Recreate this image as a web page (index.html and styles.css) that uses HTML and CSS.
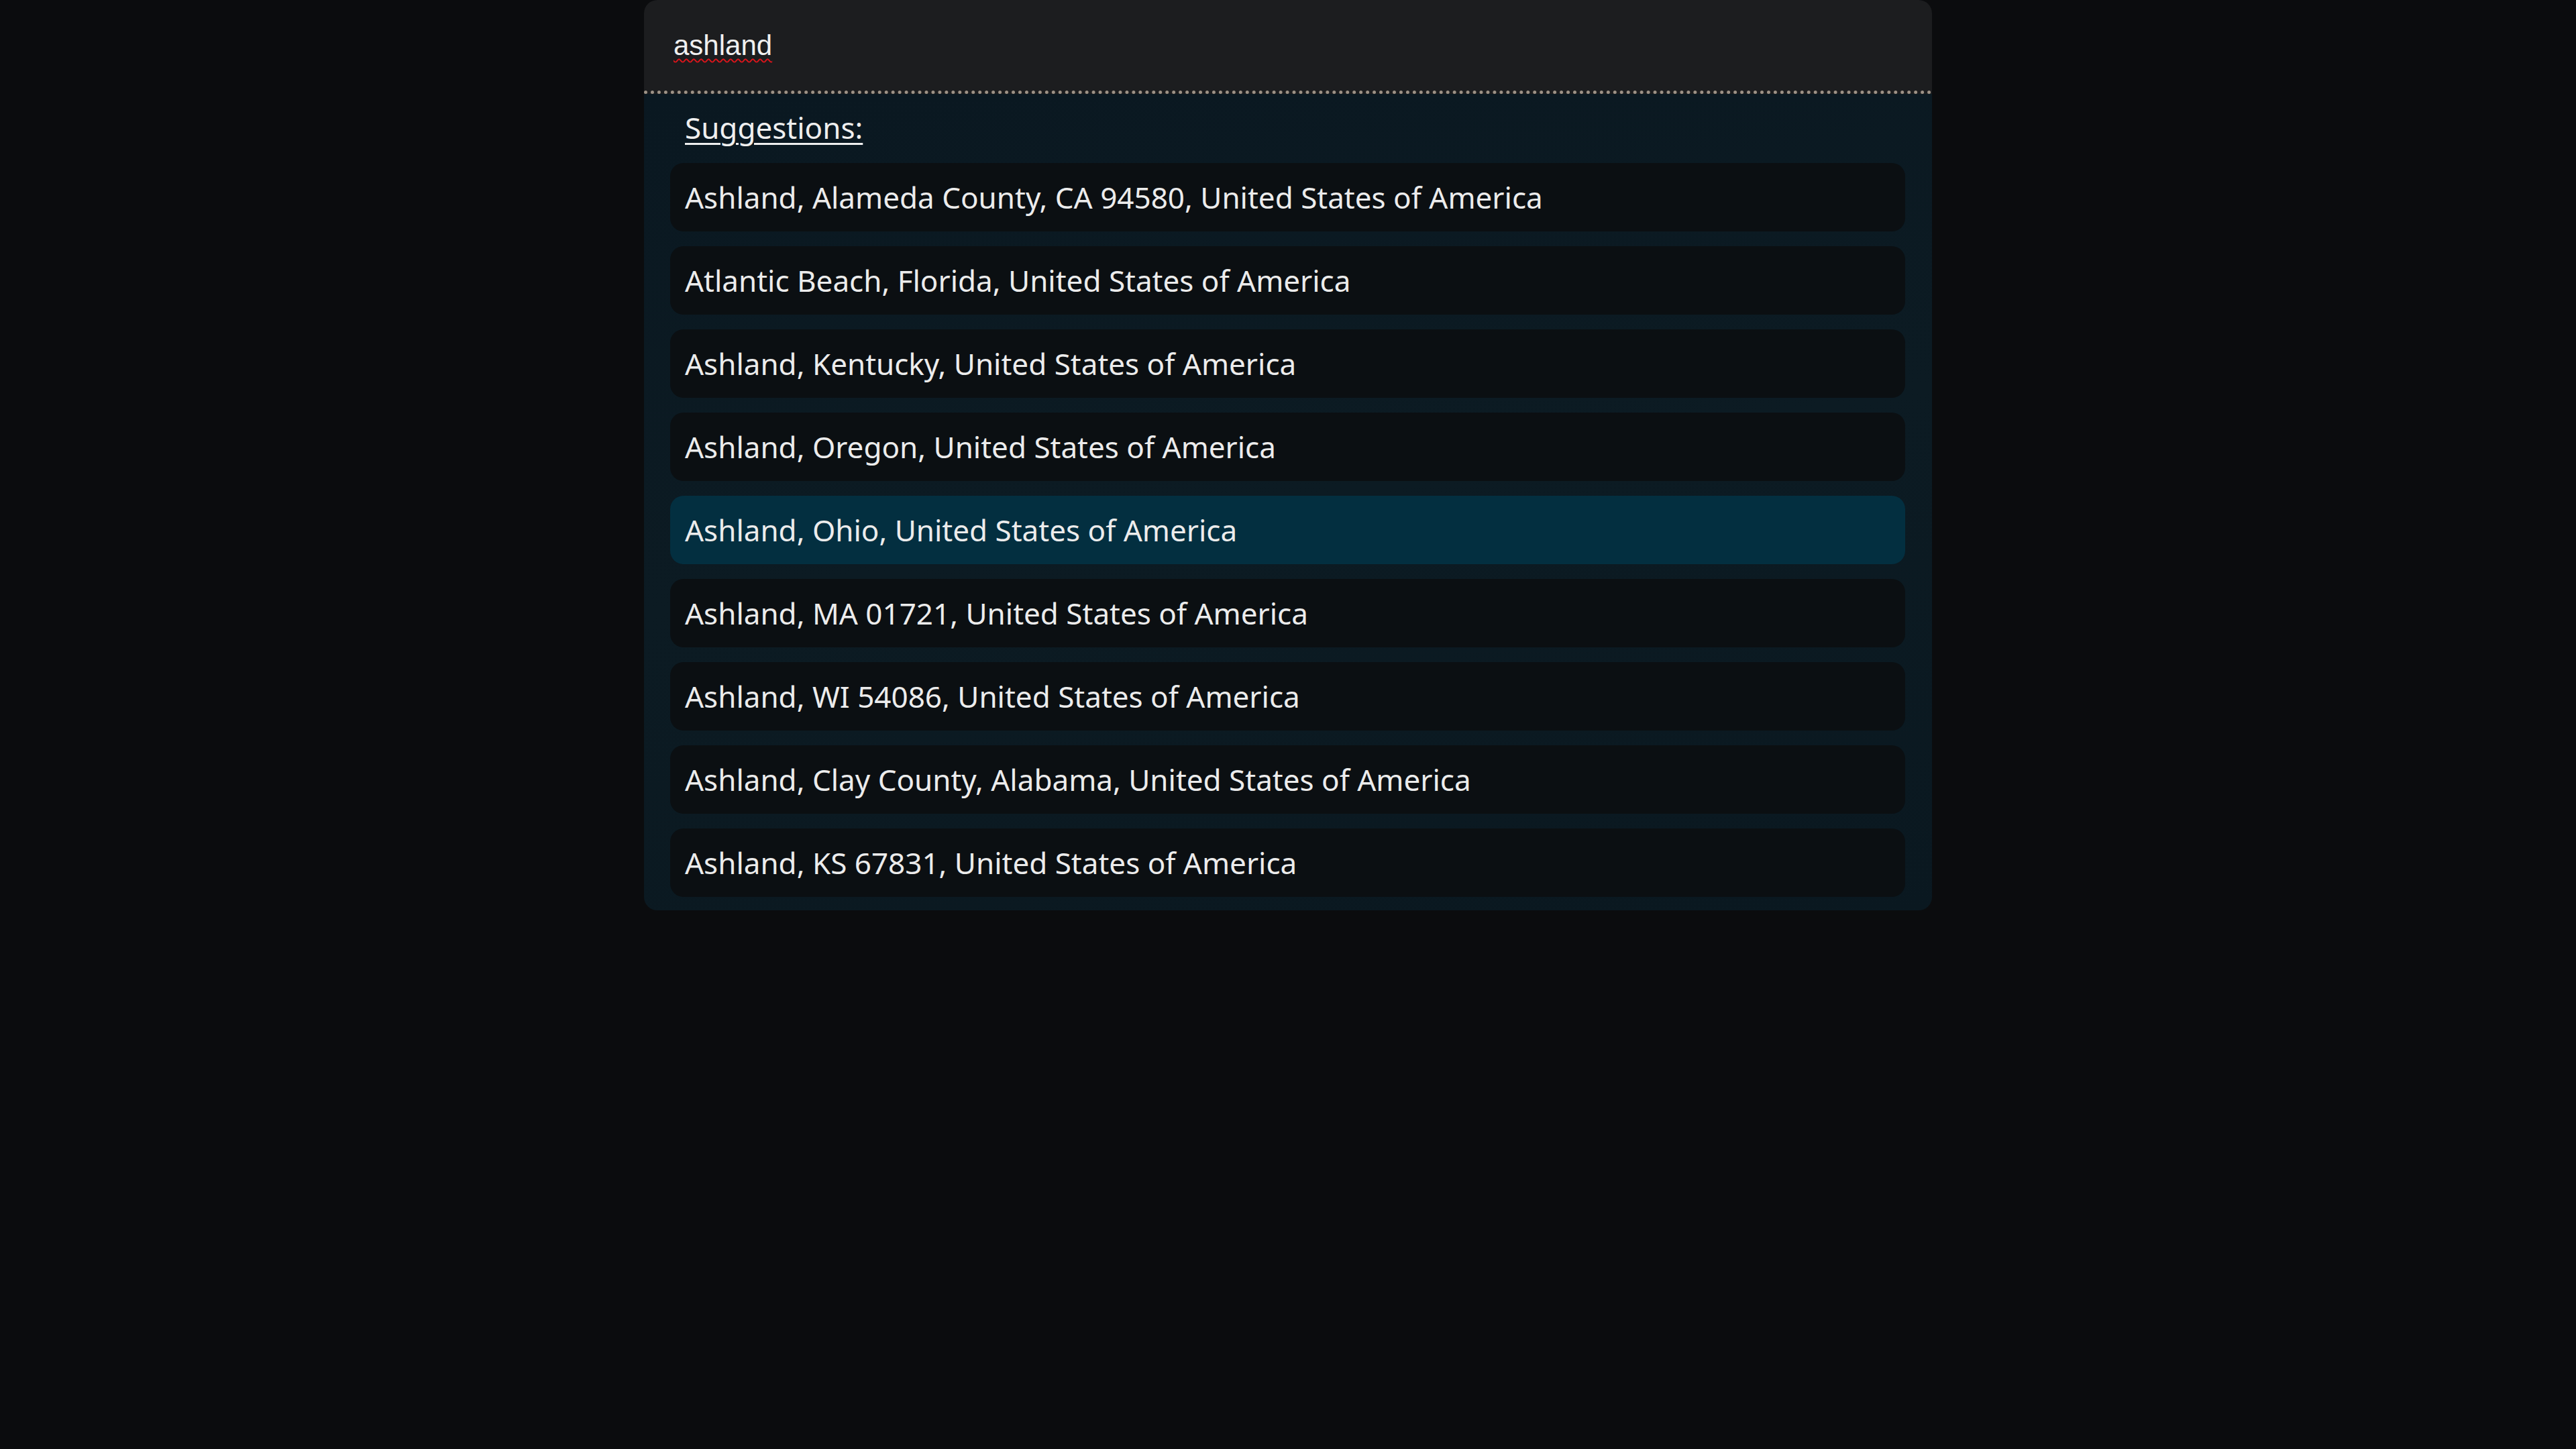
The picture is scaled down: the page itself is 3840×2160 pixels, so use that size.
FILE: index.html
```html
<!DOCTYPE html>
<html lang="en">
<head>
<meta charset="utf-8">
<title>Location search</title>
<link rel="stylesheet" href="styles.css">
</head>
<body>
<div class="search-panel">
  <div class="search-field" role="textbox"><span class="typed">ashland</span></div>
  <div class="suggestions">
    <div class="suggestions-title">Suggestions:</div>
    <ul class="suggestion-list">
      <li class="suggestion">Ashland, Alameda County, CA 94580, United States of America</li>
      <li class="suggestion">Atlantic Beach, Florida, United States of America</li>
      <li class="suggestion">Ashland, Kentucky, United States of America</li>
      <li class="suggestion">Ashland, Oregon, United States of America</li>
      <li class="suggestion is-active">Ashland, Ohio, United States of America</li>
      <li class="suggestion">Ashland, MA 01721, United States of America</li>
      <li class="suggestion">Ashland, WI 54086, United States of America</li>
      <li class="suggestion">Ashland, Clay County, Alabama, United States of America</li>
      <li class="suggestion">Ashland, KS 67831, United States of America</li>
    </ul>
  </div>
</div>
</body>
</html>
```
FILE: styles.css
```css
html, body {
  margin: 0;
  padding: 0;
  background: #0b0c0e;
  min-height: 100%;
}
body {
  min-height: 2160px;
  font-family: "Noto Sans", "Open Sans", sans-serif;
  color: #ececec;
}
.search-panel {
  width: 1920px;
  margin: 0 auto;
  border-radius: 20px;
  overflow: hidden;
}
.search-field {
  box-sizing: border-box;
  height: 140px;
  padding: 0 44px;
  display: flex;
  align-items: center;
  background: #1c1d1f;
  border-bottom: 5px dotted #9d9286;
  font-family: "Liberation Sans", Arial, sans-serif;
  font-size: 42px;
  color: #f0f0f0;
}
.typed {
  text-decoration: underline wavy #e0141a;
  text-decoration-thickness: 2px;
  text-underline-offset: 5px;
  text-decoration-skip-ink: none;
}
.suggestions {
  background: linear-gradient(170deg, #0a1821 0%, #0c1b23 50%, #0a1820 100%);
  padding: 20px 40px 20px 39px;
}
.suggestions-title {
  font-size: 44px;
  line-height: 60px;
  padding-left: 22px;
  margin-bottom: 23px;
  text-decoration: underline;
  text-decoration-thickness: 3px;
  text-underline-offset: 6px;
  color: #efefef;
}
.suggestion-list {
  list-style: none;
  margin: 0;
  padding: 0;
  display: flex;
  flex-direction: column;
  gap: 22px;
}
.suggestion {
  background: #0b0f12;
  border-radius: 20px;
  padding: 20px 22px;
  font-size: 44px;
  line-height: 62px;
  color: #ececec;
  white-space: nowrap;
}
.suggestion.is-active {
  background: #032f40;
}
```
